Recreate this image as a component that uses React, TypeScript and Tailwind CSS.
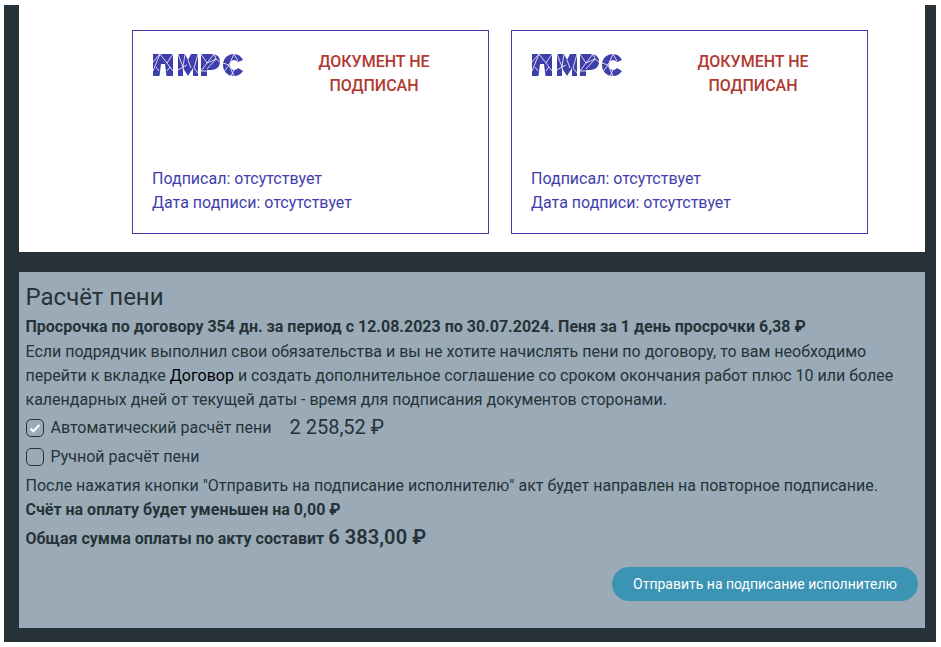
const INK = 'text-[#263238]';

function PmrsLogo() {
  return (
    <svg width="90" height="23" viewBox="0 0 90 23" className="block">
      <g fill="#3f3ead">
        {/* П */}
        <path d="M0 0h20v22h-6.500l-1.500-12H8L6.500 22H0z" />
        {/* М */}
        <path d="M25 0h7l3 6 3-6h7v22h-5v-8l-5 8-5-8v8h-5z" />
        {/* Р */}
        <path d="M48 0h10c6 0 9 3 9 7.500S64 16 58 16h-4v6h-6z" />
        {/* С */}
        <path d="M90 6c-2-4-5-6-9-6-7 0-11 5-11 11s4 11 11 11c4 0 7-2 9-5l-5-3c-1 1-2 2-4 2-3 0-4-3-4-5s1-5 4-5c2 0 3 1 4 2z" />
      </g>
      <g stroke="#ffffff" strokeWidth="0.8" fill="none">
        <path d="M0 8l7-8 7 9 6-9M7 0L0 17M6 17l-3-4M14 17l3-4M14 9l6 8" />
        <path d="M25 0l5 13 1 9M32 0l-2 13-5 3M38 14l-3-8M45 0l-4 14M41 14l4 5M30 13l4-2" />
        <path d="M48 0l6 9 7-9M54 9l-6 8M54 9l9-4M61 0l2 5 4 3M54 15l9-10M48 17l6 0" />
        <path d="M81 0l-5 11-6-2M76 11l5 11M76 11l-6 8M81 0l4 7M81 16l-3 6" />
      </g>
    </svg>
  );
}

function SignatureCard() {
  return (
    <div className="w-[357px] h-[204px] border border-[#3f3ead] pt-[19px] pl-5 pr-5 flex flex-col">
      <div className="flex justify-between items-start">
        <div className="pt-[4px]">
          <PmrsLogo />
        </div>
        <div className="w-[190px] -mr-[1px] text-center font-medium text-[#b0392f]">
          ДОКУМЕНТ НЕ
          <br />
          ПОДПИСАН
        </div>
      </div>
      <div className="mt-[69px] -ml-[1px] text-[#3f3ead]">
        <p>Подписал: отсутствует</p>
        <p>Дата подписи: отсутствует</p>
      </div>
    </div>
  );
}

function Check({ checked, label }: { checked?: boolean; label: string }) {
  return (
    <label className="flex items-center">
      <span className="w-[18px] h-[18px] rounded-[5px] border-[1.5px] border-[#263238] bg-[#9aabb7] flex items-center justify-center">
        {checked && (
          <svg width="12" height="12" viewBox="0 0 12 12" fill="none">
            <path d="M1.500 6.500l2.800 2.800L10.500 3" stroke="#ffffff" strokeWidth="2" />
          </svg>
        )}
      </span>
      <span className="ml-[6.500px]">{label}</span>
    </label>
  );
}

export default function App() {
  return (
    <div className="w-[941px] h-[647px] bg-white pt-[5px] pl-1 font-['Roboto',sans-serif] text-base leading-6">
      <div className="w-[932px] h-[637px] bg-[#263238] pl-[15px] pr-[11px]">
        {/* Signatures */}
        <section className="h-[247px] bg-white pt-[25px] pl-[113px] flex gap-[22px]">
          <SignatureCard />
          <SignatureCard />
        </section>

        {/* Penalty */}
        <section className={`mt-5 h-[356px] bg-[#9aabb7] pl-[6.500px] pr-[7px] pt-[11px] ${INK}`}>
          <h2 className="text-2xl leading-[28px]">Расчёт пени</h2>
          <p className="mt-[4px] font-bold">
            Просрочка по договору 354 дн. за период с 12.08.2023 по 30.07.2024. Пеня за 1 день просрочки 6,38 ₽
          </p>
          <p className="mt-[1px]">
            Если подрядчик выполнил свои обязательства и вы не хотите начислять пени по договору, то вам необходимо
            перейти к вкладке <span className="text-black">Договор</span> и создать дополнительное соглашение со сроком
            окончания работ плюс 10 или более календарных дней от текущей даты - время для подписания документов
            сторонами.
          </p>
          <div className="mt-[4px] flex items-center h-6 pl-[0.500px]">
            <Check checked label="Автоматический расчёт пени" />
            <span className="ml-[18px] mb-[2px] text-[20px]">2 258,52 ₽</span>
          </div>
          <div className="mt-[5px] h-6 flex items-center pl-[0.500px]">
            <Check label="Ручной расчёт пени" />
          </div>
          <p className="mt-[5px]">
            После нажатия кнопки "Отправить на подписание исполнителю" акт будет направлен на повторное подписание.
          </p>
          <p className="font-bold">Счёт на оплату будет уменьшен на 0,00 ₽</p>
          <p className="mt-[3px] font-bold">
            Общая сумма оплаты по акту составит{' '}
            <span className="text-[20px] font-semibold tracking-[0.1px]">6 383,00 ₽</span>
          </p>
          <div className="mt-[16px] flex justify-end">
            <button className="w-[306px] h-[34px] rounded-full bg-[#3b94b3] text-white text-sm">
              Отправить на подписание исполнителю
            </button>
          </div>
        </section>
      </div>
    </div>
  );
}
